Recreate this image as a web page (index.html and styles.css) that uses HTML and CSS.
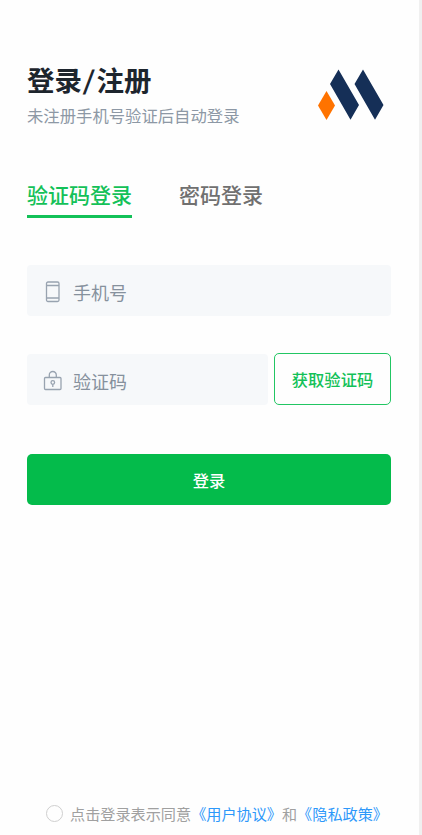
FILE: index.html
```html
<!DOCTYPE html>
<html lang="zh-CN">
<head>
<meta charset="utf-8">
<title>登录/注册</title>
<link rel="stylesheet" href="styles.css">
</head>
<body>
<main class="page">
  <header class="header">
    <div>
      <h1 class="title">登录<span class="slash">/</span>注册</h1>
      <p class="subtitle">未注册手机号验证后自动登录</p>
    </div>
    <svg class="logo" width="66" height="52" viewBox="0 0 66 52">
      <path fill="#ff7300" d="M8.5 22 17 36.500 8.500 51 0 36.500z"/>
      <path fill="#152f57" d="M20.500 0.500 41 36 32.500 50.700 12 15zM45 0.500 65.500 36 57 50.700 36.500 15z"/>
    </svg>
  </header>
  <nav class="tabs">
    <a class="tab active">验证码登录</a>
    <a class="tab">密码登录</a>
  </nav>
  <form class="form">
    <div class="field">
      <svg class="icon" width="20" height="22" viewBox="0 0 20 22">
        <rect x="3.500" y="1" width="12.500" height="19.500" rx="1.500"/>
        <path d="M3.500 4.500H16M3.500 17H16"/>
      </svg>
      <span>手机号</span>
    </div>
    <div class="row">
      <div class="field">
        <svg class="icon" width="20" height="22" viewBox="0 0 20 22">
          <rect x="1.500" y="7.500" width="16.500" height="12" rx="1"/>
          <path d="M6.300 7.500V5a3.500 3.500 0 0 1 7 0v2.500M9.800 14.500V17"/>
          <circle cx="9.800" cy="12.500" r="1.800"/>
        </svg>
        <span>验证码</span>
      </div>
      <button class="code" type="button">获取验证码</button>
    </div>
    <button class="submit" type="button">登录</button>
  </form>
  <footer class="agreement">
    <span class="radio"></span>
    <span>点击登录表示同意<a>《用户协议》</a>和<a>《隐私政策》</a></span>
  </footer>
</main>
</body>
</html>
```
FILE: styles.css
```css
* { box-sizing: border-box; }
body {
  margin: 0;
  background: #fefefe;
  font-family: "Noto Sans CJK SC", sans-serif;
}
.page {
  display: flex;
  flex-direction: column;
  height: 835px;
  padding: 59px 28px 0 27px;
  border-right: 3px solid #f0f0f0;
}
.header {
  display: flex;
  justify-content: space-between;
  height: 120px;
}
.title {
  margin: 0;
  font-size: 27.5px;
  line-height: 40px;
  font-weight: 700;
  color: #1d252d;
}
.slash {
  display: inline-block;
  width: 14.500px;
  text-align: center;
  transform: skewX(-6deg) scaleY(0.92);
}
.subtitle {
  margin: 4px 0 0;
  font-size: 16.350px;
  line-height: 24px;
  color: #8d98a5;
}
.logo { margin: 10px 7px 0 0; }
.tabs {
  display: flex;
  gap: 47px;
  height: 39px;
}
.tab {
  font-size: 21px;
  line-height: 30px;
  font-weight: 500;
  color: #707070;
}
.tab.active {
  color: #13c158;
  border-bottom: 3px solid #13c158;
}
.form {
  display: flex;
  flex-direction: column;
  margin-top: 47px;
}
.field {
  display: flex;
  align-items: center;
  flex: 1;
  gap: 10px;
  height: 51px;
  min-height: 51px;
  padding: 2px 16px 0;
  border-radius: 4px;
  background: #f6f8fa;
  color: #86919d;
  font-size: 18px;
}
.icon {
  fill: none;
  stroke: #98a3b0;
  stroke-width: 1.300;
}
.row {
  display: flex;
  gap: 6px;
  height: 51px;
  margin-top: 38px;
}
.code, .submit {
  padding: 0 0 1px;
  font-family: inherit;
  font-size: 16.300px;
  font-weight: 500;
  border-radius: 5px;
}
.code {
  width: 117px;
  height: 52px;
  margin-top: -1px;
  border: 1px solid #22c663;
  background: #fefefe;
  color: #13c158;
}
.submit {
  height: 51px;
  margin-top: 49px;
  padding: 0;
  border: 0;
  background: #04bb4b;
  color: #fff;
}
.agreement {
  display: flex;
  align-items: center;
  gap: 7px;
  height: 24px;
  margin: auto 0 10px 19px;
  font-size: 15.150px;
  color: #a0a0a0;
  white-space: nowrap;
}
.agreement a { color: #2d98fa; }
.radio {
  width: 17px;
  height: 17px;
  border: 1px solid #cfcfcf;
  border-radius: 50%;
}
```
